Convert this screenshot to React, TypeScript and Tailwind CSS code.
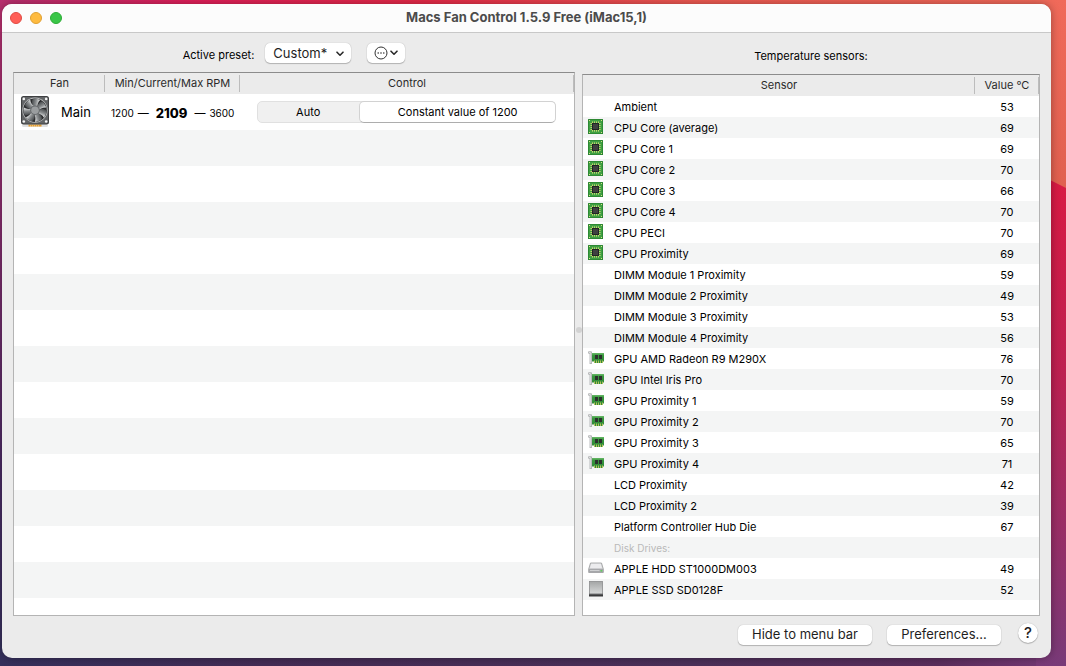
import { useState } from 'react';
import type { ReactNode } from 'react';
import clsx from 'clsx';

type IconKind = 'cpu' | 'gpu' | 'hdd' | 'ssd';

interface Sensor {
  name: string;
  value?: number;
  icon?: IconKind;
}

const sensors: Sensor[] = [
  { name: 'Ambient', value: 53 },
  { name: 'CPU Core (average)', value: 69, icon: 'cpu' },
  { name: 'CPU Core 1', value: 69, icon: 'cpu' },
  { name: 'CPU Core 2', value: 70, icon: 'cpu' },
  { name: 'CPU Core 3', value: 66, icon: 'cpu' },
  { name: 'CPU Core 4', value: 70, icon: 'cpu' },
  { name: 'CPU PECI', value: 70, icon: 'cpu' },
  { name: 'CPU Proximity', value: 69, icon: 'cpu' },
  { name: 'DIMM Module 1 Proximity', value: 59 },
  { name: 'DIMM Module 2 Proximity', value: 49 },
  { name: 'DIMM Module 3 Proximity', value: 53 },
  { name: 'DIMM Module 4 Proximity', value: 56 },
  { name: 'GPU AMD Radeon R9 M290X', value: 76, icon: 'gpu' },
  { name: 'GPU Intel Iris Pro', value: 70, icon: 'gpu' },
  { name: 'GPU Proximity 1', value: 59, icon: 'gpu' },
  { name: 'GPU Proximity 2', value: 70, icon: 'gpu' },
  { name: 'GPU Proximity 3', value: 65, icon: 'gpu' },
  { name: 'GPU Proximity 4', value: 71, icon: 'gpu' },
  { name: 'LCD Proximity', value: 42 },
  { name: 'LCD Proximity 2', value: 39 },
  { name: 'Platform Controller Hub Die', value: 67 },
  { name: 'Disk Drives:' },
  { name: 'APPLE HDD ST1000DM003', value: 49, icon: 'hdd' },
  { name: 'APPLE SSD SD0128F', value: 52, icon: 'ssd' },
];

const bladeAngles = [10, 61, 113, 164, 216, 267, 319];

function FanIcon() {
  return (
    <svg width="30" height="33" viewBox="0 0 30 33" aria-hidden="true">
      <defs>
        <linearGradient id="blade" x1="0" y1="0" x2="1" y2="0">
          <stop offset="0" stopColor="#46494b" />
          <stop offset=".55" stopColor="#8b8e90" />
          <stop offset="1" stopColor="#eceeee" />
        </linearGradient>
      </defs>
      <rect x="2" y="28" width="26" height="3" rx="1.5" fill="#000" opacity=".12" />
      <path d="M8.500 28.500h13v2h-13z" fill="#e39b2d" />
      <path d="M10.500 29v2M12.500 29v2M14.500 29v2M16.500 29v2M18.500 29v2" stroke="#f6dcae" strokeWidth=".5" />
      <rect x="1" y="0" width="28" height="28.500" rx="2.500" fill="#3f4042" />
      <rect x="2" y="1" width="26" height="26.500" rx="2" fill="#626466" />
      <circle cx="15" cy="14.200" r="12.600" fill="#b9bbbc" />
      <circle cx="15" cy="14.200" r="11.800" fill="#2c2d2f" />
      {bladeAngles.map((deg) => (
        <path
          key={deg}
          d="M13 11C10.500 8 9.800 5.500 10.800 3.600C13.200 2.500 16.300 2.500 18.200 3.200C16.600 5.500 16.300 8 17 11Z"
          fill="url(#blade)"
          transform={`rotate(${deg} 15 14.200)`}
        />
      ))}
      <circle cx="15" cy="14.200" r="4.800" fill="#66696b" />
      <circle cx="15" cy="14.200" r="3.800" fill="#9a9d9f" />
      <circle cx="3.800" cy="2.900" r="1.300" fill="#f4f4f4" />
      <circle cx="26.200" cy="2.900" r="1.300" fill="#f4f4f4" />
      <circle cx="3.800" cy="25.500" r="1.300" fill="#f4f4f4" />
      <circle cx="26.200" cy="25.500" r="1.300" fill="#f4f4f4" />
    </svg>
  );
}

function CpuIcon() {
  return (
    <svg width="16" height="16" viewBox="0 0 16 16" aria-hidden="true">
      <rect x="0" y="0" width="15" height="15" rx=".5" fill="#237a2b" />
      <rect x=".6" y=".6" width="13.800" height="13.800" fill="#3fa143" />
      <path d="M1 1h1v1H1zM13 1h1v1h-1zM1 13h1v1H1zM13 13h1v1h-1z" fill="#d5df86" />
      <path
        d="M4.500 2.400v10.200M6.500 2.400v10.200M8.500 2.400v10.200M10.500 2.400v10.200M2.400 4.500h10.200M2.400 6.500h10.200M2.400 8.500h10.200M2.400 10.500h10.200"
        stroke="#d6d675"
        strokeWidth=".9"
      />
      <rect x="4" y="4" width="7" height="7" fill="#222423" />
      <rect x="5" y="5" width="5" height="5" fill="#3f4140" />
    </svg>
  );
}

function GpuIcon() {
  return (
    <svg width="16" height="16" viewBox="0 0 16 16" aria-hidden="true">
      <defs>
        <linearGradient id="board" x1="0" y1="0" x2="0" y2="1">
          <stop offset="0" stopColor="#69b968" />
          <stop offset=".3" stopColor="#37963d" />
          <stop offset="1" stopColor="#2f8a38" />
        </linearGradient>
      </defs>
      <path d="M4 3h12v8.500H4z" fill="url(#board)" />
      <path d="M7 5h3v4H7zM11 5h3v4h-3z" fill="#2b312d" />
      <path d="M6 11h9v2H6z" fill="#2f8a38" />
      <path d="M6.500 10.500v2.500M8.500 10.500v2.500M10.500 10.500v2.500M12.500 10.500v2.500M14.500 10.500v2.500" stroke="#d6cf62" strokeWidth=".8" />
      <path d="M.3 2.600H2.700V14" stroke="#909294" strokeWidth="2" fill="none" />
      <path d="M.8 2.600H2.700V13.500" stroke="#e6e7e8" strokeWidth="1" fill="none" />
    </svg>
  );
}

function HddIcon() {
  return (
    <svg width="16" height="16" viewBox="0 0 16 16" aria-hidden="true">
      <path d="M2.500 3h11l1.800 6v3.500H.7V9z" fill="#d4d5d7" stroke="#98999b" strokeWidth=".8" />
      <path d="M3.200 3.800h9.600l1.200 4.400H2z" fill="#ececee" />
      <rect x=".8" y="8.800" width="14.400" height="4" rx="1" fill="#a6a7aa" />
      <path d="M2 10.500h9.500" stroke="#cfd0d2" />
      <rect x="12.600" y="10" width="1.600" height="1.600" fill="#5fd35c" />
    </svg>
  );
}

function SsdIcon() {
  return (
    <svg width="16" height="16" viewBox="0 0 16 16" aria-hidden="true">
      <defs>
        <linearGradient id="case" x1="0" y1="0" x2="0" y2="1">
          <stop offset="0" stopColor="#a4a6a6" />
          <stop offset="1" stopColor="#dadcdc" />
        </linearGradient>
      </defs>
      <rect x="1.500" y=".5" width="13" height="13" fill="url(#case)" stroke="#8b8c8d" strokeWidth=".8" />
      <path d="M1 13h14v2.500H1z" fill="#3a3b3c" />
      <path d="M1 12.500h14v1H1z" fill="#77797a" />
    </svg>
  );
}

const icons: Record<IconKind, ReactNode> = {
  cpu: <CpuIcon />,
  gpu: <GpuIcon />,
  hdd: <HddIcon />,
  ssd: <SsdIcon />,
};

function Chevron() {
  return (
    <svg width="8" height="6" viewBox="0 0 8 6" fill="none" aria-hidden="true">
      <path d="M1 1.200l3 3 3-3" stroke="#2b2b2b" strokeWidth="1.600" strokeLinecap="round" strokeLinejoin="round" />
    </svg>
  );
}

const raised = 'bg-white shadow-[0_0_1px_rgba(0,0,0,0.3),0_1px_1px_rgba(0,0,0,0.22)]';

function HeaderCell({ children }: { children: ReactNode }) {
  return (
    <th scope="col" className="relative h-[21px] p-0 font-normal text-[#2a2a2a]">
      {children}
      <span className="absolute top-[2px] right-0 h-[17px] w-px bg-[#bcbcbc]" />
    </th>
  );
}

function FanPane() {
  const [mode, setMode] = useState<'auto' | 'constant'>('constant');

  return (
    <section className="flex min-w-0 flex-[562] flex-col">
      <div className="flex h-[39px] items-start justify-center pt-[10px]">
        <label htmlFor="preset" className="mt-1 mr-[11px] leading-4">
          Active preset:
        </label>
        <div className={clsx('relative mr-4 h-5 w-[86px] rounded-[5px]', raised)}>
          <select
            id="preset"
            className="block h-full w-full appearance-none rounded-[5px] bg-transparent pl-2 text-[13px] leading-4 text-[#1e1e1e]"
          >
            <option>Custom*</option>
          </select>
          <span className="pointer-events-none absolute top-[8px] right-[7px]">
            <Chevron />
          </span>
        </div>
        <button
          type="button"
          aria-label="Preset actions"
          className={clsx('flex h-5 w-[38px] items-center justify-center gap-[2px] rounded-[5px]', raised)}
        >
          <svg width="14" height="14" viewBox="0 0 14 14" aria-hidden="true">
            <circle cx="7" cy="7" r="6" fill="none" stroke="#333" strokeWidth="1" />
            <circle cx="4.200" cy="7" r=".8" fill="#333" />
            <circle cx="7" cy="7" r=".8" fill="#333" />
            <circle cx="9.800" cy="7" r=".8" fill="#333" />
          </svg>
          <Chevron />
        </button>
      </div>

      <div className="flex-1 border border-[#b4b4b4] border-t-[#8c8c8c] bg-[repeating-linear-gradient(to_bottom,#f4f5f5_0px,#f4f5f5_36px,#ffffff_36px,#ffffff_72px)] bg-[position:0_57px] bg-no-repeat">
        <table className="w-full table-fixed border-collapse">
          <colgroup>
            <col className="w-[91px]" />
            <col className="w-[135px]" />
            <col />
          </colgroup>
          <thead className="bg-[#ebebeb]">
            <tr>
              <HeaderCell>Fan</HeaderCell>
              <HeaderCell>Min/Current/Max RPM</HeaderCell>
              <HeaderCell>Control</HeaderCell>
            </tr>
          </thead>
          <tbody>
            <tr className="h-9 bg-white">
              <td className="p-0">
                <div className="flex items-center gap-[11px] pl-[6px] text-[13px]">
                  <FanIcon />
                  <span className="pt-[2px]">Main</span>
                </div>
              </td>
              <td className="p-0">
                <div className="flex items-center gap-1 pt-[2px] pl-[6px] text-[10px] whitespace-nowrap">
                  <span>1200</span>
                  <span className="text-[11px]">—</span>
                  <strong className="px-[3px] text-[13px] leading-4 font-extrabold">2109</strong>
                  <span className="text-[11px]">—</span>
                  <span>3600</span>
                </div>
              </td>
              <td className="p-0 pr-[18px] pl-[17px]">
                <div className="flex h-[22px] rounded-[5px] border border-[#e0e0e0] bg-[#f0f0f0]">
                  <button
                    type="button"
                    aria-pressed={mode === 'auto'}
                    onClick={() => setMode('auto')}
                    className={clsx('-my-px -ml-px flex-[103] rounded-[5px]', mode === 'auto' && 'border border-[#c6c6c6] bg-white')}
                  >
                    Auto
                  </button>
                  <button
                    type="button"
                    aria-pressed={mode === 'constant'}
                    onClick={() => setMode('constant')}
                    className={clsx(
                      '-my-px -mr-px flex-[196] rounded-[5px]',
                      mode === 'constant' && 'border border-[#d2d2d2] border-b-[#adadad] bg-white',
                    )}
                  >
                    Constant value of 1200
                  </button>
                </div>
              </td>
            </tr>
          </tbody>
        </table>
      </div>
    </section>
  );
}

function SensorPane() {
  return (
    <section className="flex min-w-0 flex-[458] flex-col">
      <h2 className="flex h-[41px] items-center justify-center pt-[6px]">Temperature sensors:</h2>
      <div className="flex-1 border border-[#b4b4b4] border-t-[#8c8c8c] bg-white">
        <table className="w-full table-fixed border-collapse">
          <colgroup>
            <col />
            <col className="w-[64px]" />
          </colgroup>
          <thead className="bg-[#ebebeb]">
            <tr>
              <HeaderCell>Sensor</HeaderCell>
              <HeaderCell>Value °C</HeaderCell>
            </tr>
          </thead>
          <tbody>
            {sensors.map((sensor) => (
              <tr key={sensor.name} className="h-[21px] even:bg-[#f4f5f5]">
                <td className="p-0">
                  <div className="flex items-center pl-[5px] leading-4">
                    <span className="mr-[10px] h-[17px] w-4 shrink-0">{sensor.icon && icons[sensor.icon]}</span>
                    <span className={sensor.value === undefined ? 'text-[10px] text-[#b9b9b9]' : 'pt-px'}>{sensor.name}</span>
                  </div>
                </td>
                <td className="p-0 pt-px text-center leading-4">{sensor.value}</td>
              </tr>
            ))}
          </tbody>
        </table>
      </div>
    </section>
  );
}

export default function App() {
  return (
    <div className="relative flex min-h-screen bg-[linear-gradient(to_bottom,#b8306f_0%,#8a2c6d_30%,#4a2a63_70%,#35305c_100%)] pt-1 pr-[15px] pb-2 pl-[2px] font-['Inter','Liberation_Sans',sans-serif] text-[11px] text-black">
      <div className="absolute inset-x-0 top-0 h-8 bg-[linear-gradient(to_right,#b8306f_0%,#e0205a_18%,#e52a48_40%,#ee5a52_65%,#f06a5a_100%)]" />
      <div className="absolute inset-x-0 bottom-0 h-6 bg-[linear-gradient(to_right,#35305c_0%,#442c55_25%,#4b3059_65%,#5a2d5c_88%,#783a78_100%)]" />
      <svg
        className="absolute inset-y-0 right-0 h-full w-[30px]"
        viewBox="0 0 30 666"
        preserveAspectRatio="none"
        aria-hidden="true"
      >
        <defs>
          <linearGradient id="coral" x1="0" y1="0" x2="0" y2="1">
            <stop offset="0" stopColor="#f06a5a" />
            <stop offset="1" stopColor="#e0604f" />
          </linearGradient>
          <linearGradient id="crimson" x1="0" y1="0" x2="0" y2="1">
            <stop offset="0" stopColor="#d91a43" />
            <stop offset=".4" stopColor="#bd2050" />
            <stop offset="1" stopColor="#783a78" />
          </linearGradient>
        </defs>
        <path d="M0 0h30v190H0z" fill="url(#coral)" />
        <path d="M0 173L30 188V666H0z" fill="url(#crimson)" />
      </svg>

      <main className="relative flex flex-1 flex-col overflow-hidden rounded-[10px] bg-[#ebebeb] shadow-[0_0_8px_rgba(0,0,0,0.35)]">
        <header className="relative flex h-[29px] items-center justify-center border-b border-[#c8c8c8] bg-[#fcfcfc]">
          <div className="absolute left-2 flex gap-2">
            <button type="button" aria-label="Close" className="size-3 rounded-full border border-[#e04b43] bg-[#ff5f57]" />
            <button type="button" aria-label="Minimize" className="size-3 rounded-full border border-[#dfa032] bg-[#febb40]" />
            <button type="button" aria-label="Zoom" className="size-3 rounded-full border border-[#2dac36] bg-[#3ac648]" />
          </div>
          <h1 className="text-[13px] font-bold text-[#4b4b4b]">Macs Fan Control 1.5.9 Free (iMac15,1)</h1>
        </header>

        <div className="flex flex-1 px-[11px]">
          <FanPane />
          <div className="flex w-[7px] items-center justify-center pt-[11px]">
            <span className="size-[6px] rounded-full bg-[#d2d2d2]" />
          </div>
          <SensorPane />
        </div>

        <footer className="flex h-[42px] items-start justify-end pt-[9px] pr-[13px] text-[13px] text-[#1e1e1e]">
          <button type="button" className={clsx('mr-[15px] h-5 w-[134px] rounded-[5px]', raised)}>
            Hide to menu bar
          </button>
          <button type="button" className={clsx('mr-[17px] h-5 w-[114px] rounded-[5px]', raised)}>
            Preferences...
          </button>
          <button
            type="button"
            aria-label="Help"
            className={clsx('-mt-[2px] size-5 rounded-full text-[15px] leading-5 font-medium', raised)}
          >
            ?
          </button>
        </footer>
      </main>
    </div>
  );
}
